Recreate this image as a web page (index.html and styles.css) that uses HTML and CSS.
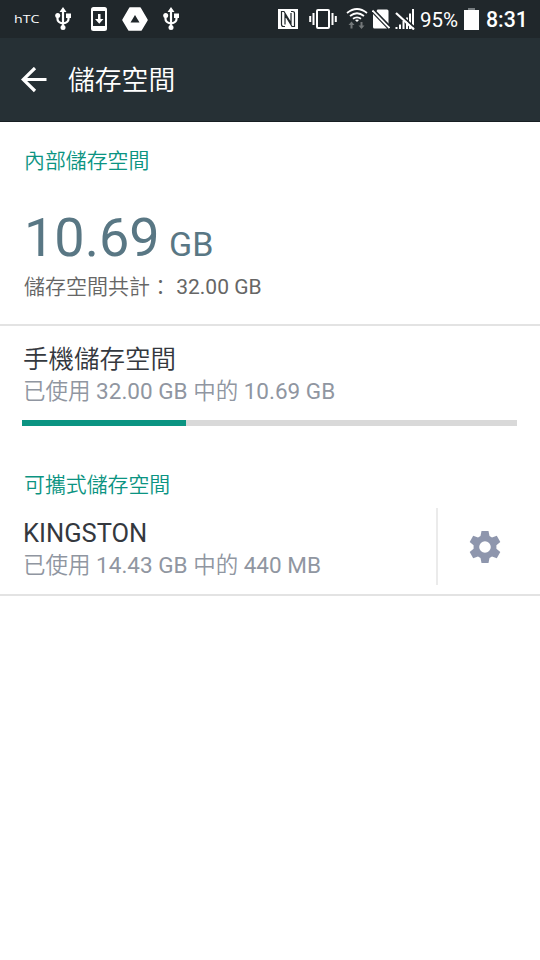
FILE: index.html
```html
<!DOCTYPE html>
<html lang="zh-Hant">
<head>
<meta charset="utf-8">
<title>儲存空間</title>
<link rel="stylesheet" href="styles.css">
</head>
<body>
<header class="top">
  <div class="status">
    <div class="carrier"><span class="carrier-name">hTC</span></div>
    <svg class="usb" width="18" height="24" viewBox="0 0 18 24"><path d="M8 3v17M2.500 8v4q0 3.500 5.500 4.500M13.500 8v4q0 3.500-5.500 4.500" fill="none" stroke="#fff" stroke-width="2.200"/><path d="M8 0l3.500 5h-7zM11 6.500h5v4.500h-5z" fill="#fff"/><circle cx="2.700" cy="8.500" r="2.500" fill="#fff"/><circle cx="8" cy="20.500" r="2.500" fill="#fff"/></svg>
    <svg class="download" width="16" height="24" viewBox="0 0 16 24"><rect width="16" height="24" rx="2.500" fill="#fff"/><path d="M2 4h12v15H2z" fill="#20272b"/><path d="M7 7h2.500v5h3L8.250 16.800 4 12h3z" fill="#fff"/></svg>
    <svg class="drive" width="26" height="24" viewBox="0 0 26 24"><path d="M8 1h10l7 12-6 10H7L1 13z" fill="#fff" stroke="#fff" stroke-width="1.500" stroke-linejoin="round"/><path d="M13 8l4.500 7.500h-9z" fill="#20272b"/></svg>
    <svg class="usb" width="18" height="24" viewBox="0 0 18 24"><path d="M9 3v17M3.500 8v4q0 3.500 5.500 4.500M14.500 8v4q0 3.500-5.500 4.500" fill="none" stroke="#fff" stroke-width="2.200"/><path d="M9 0l3.500 5h-7zM12 6.500h5v4.500h-5z" fill="#fff"/><circle cx="3.700" cy="8.500" r="2.500" fill="#fff"/><circle cx="9" cy="20.500" r="2.500" fill="#fff"/></svg>
    <div class="indicators">
      <svg class="nfc" width="20" height="20" viewBox="0 0 20 20"><path d="M0 0h20v20H0z" fill="#fff"/><path d="M7 17.500H5.500Q3.500 17.500 3.500 15.500V2.500H6L13 14V4M7 15.500V6l7 11.500h2.500V4.500q0-2-2-2H13" fill="none" stroke="#20272b" stroke-width="1.200"/></svg>
      <svg class="vibrate" width="28" height="20" viewBox="0 0 28 20"><rect x="8" y="1" width="12" height="18" rx="1" fill="none" stroke="#fff" stroke-width="2"/><path d="M4.500 4v12M23.500 4v12M1.200 7v6M26.800 7v6" stroke="#fff" stroke-width="2"/></svg>
      <svg class="wifi" width="22" height="22" viewBox="0 0 22 22"><path d="M1 5Q11-3 21 5M4 8Q11 2.500 18 8M7 10.800Q11 7.800 15 10.800" fill="none" stroke="#fff" stroke-width="1.800"/><path d="M9 12q2-1 4 0l-2 2z" fill="#fff"/><path d="M5.500 13.500l3 3.500H6.500v3.500h-2V17h-2zM15.500 21l-3-3.500h2V14h2v3.500h2z" fill="#727779"/></svg>
      <svg class="nosim" width="18" height="20" viewBox="0 0 18 20"><path d="M5.500 .5H15q1.500 0 1.500 1.500v13L4 2.700zM1 5l14 14.500H2.500Q1 19.500 1 18z" fill="#fff"/><path d="M.5 1.500l17 17.500" stroke="#fff" stroke-width="1.800"/><path d="M2 .5L17.500 16.500" stroke="#20272b" stroke-width="1.200"/></svg>
      <svg class="nosignal" width="20" height="21" viewBox="0 0 20 21"><path d="M1.500 18v2M5 15.500V20M8.500 12v8M12 8.500V20M15 4.500V20M18 0v20" stroke="#fff" stroke-width="2"/><path d="M3 3.500L19 18" stroke="#20272b" stroke-width="2"/><path d="M1 4l18 16.500" stroke="#fff" stroke-width="2.200"/></svg>
      <span class="percent">95%</span>
      <svg class="battery" width="15" height="22" viewBox="0 0 15 22"><path d="M4 0h7v2H4z" fill="#777d80"/><path d="M0 2h15v20H0z" fill="#fff"/></svg>
      <span class="clock">8:31</span>
    </div>
  </div>
  <div class="appbar">
    <svg class="back" width="26" height="26" viewBox="0 0 26 26"><path d="M25.500 12.500H2M14 1L2.200 12.500 14 24" fill="none" stroke="#fff" stroke-width="3.200"/></svg>
    <h1 class="title">儲存空間</h1>
  </div>
</header>
<main>
  <section class="summary">
    <h2 class="heading">內部儲存空間</h2>
    <div class="amount">10.69 <span class="unit">GB</span></div>
    <div class="total"><span class="han">儲存空間共計：</span> 32.00 GB</div>
  </section>
  <section class="phone">
    <div class="name"><span class="han">手機儲存空間</span></div>
    <div class="usage"><span class="han">已使用</span> 32.00 GB <span class="han">中的</span> 10.69 GB</div>
    <div class="bar"><div class="fill" style="width:33.1%"></div></div>
  </section>
  <section class="portable">
    <h2 class="heading">可攜式儲存空間</h2>
    <div class="volume">
      <div class="details">
        <div class="name">KINGSTON</div>
        <div class="usage"><span class="han">已使用</span> 14.43 GB <span class="han">中的</span> 440 MB</div>
      </div>
      <div class="settings">
        <svg width="32" height="32" viewBox="0 0 32 32"><path fill-rule="evenodd" fill="#8e96ad" d="M12.500 0h7l1 5 2.500 1.500 4.800-1.800L31.300 11l-3.900 3.200v3.600l3.900 3.200-3.500 6.300-4.800-1.800-2.500 1.500-1 5h-7l-1-5L9 25.500l-4.800 1.800L.7 21l3.900-3.200v-3.600L.7 11l3.500-6.300L9 6.500 11.500 5zM16 10.200a5.800 5.800 0 1 0 0 11.600 5.800 5.800 0 0 0 0-11.600z"/></svg>
      </div>
    </div>
  </section>
</main>
</body>
</html>
```
FILE: styles.css
```css
* { box-sizing: border-box; }
body {
  margin: 0;
  min-height: 960px;
  background: #fff;
  font-family: Roboto, "Noto Sans CJK TC", sans-serif;
}
h1, h2 { margin: 0; }
h1, h2, .han { font-weight: 350; }
svg { display: block; flex: none; }
.top { height: 122px; background: #263035; border-bottom: 1px solid #171e22; color: #fff; }
.status { display: flex; align-items: center; height: 38px; padding: 0 13px 0 14px; background: #20272b; }
.carrier { width: 41px; font: 10.5px/14px "Open Sans", sans-serif; }
.carrier-name { display: inline-block; transform: scaleX(1.35); transform-origin: left; }
.download { margin-left: 18px; }
.drive { margin: 0 14px 0 15px; }
.indicators { display: flex; align-items: center; margin-left: auto; }
.nfc { margin-right: 1px; }
.vibrate { margin-left: 10px; }
.wifi { margin-left: 9px; }
.nosim { margin-left: 4px; }
.nosignal { margin-left: 5px; }
.percent { width: 39px; margin-left: 5px; padding-top: 1px; font-size: 20.5px; white-space: nowrap; }
.battery { margin-left: 5px; }
.clock { width: 41px; margin-left: 7px; padding-top: 1px; font-size: 21.3px; font-weight: 500; }
.appbar { display: flex; align-items: center; height: 83px; padding: 0 21px; gap: 21px; }
.title { padding-top: 2px; font-size: 26.8px; line-height: 40px; }
.summary { height: 204px; padding: 23px 23px 0 24px; border-bottom: 2px solid #e3e3e3; }
.heading { color: #0b9482; font-size: 20.9px; line-height: 32px; }
.amount { margin-top: 29px; color: #597784; font-size: 54px; line-height: 64px; white-space: nowrap; }
.unit { margin-left: -4px; font-size: 34px; }
.total { margin-top: -5px; color: #666; font-size: 21px; line-height: 32px; }
.phone { height: 143px; padding: 16px 23px 0 22px; }
.name { padding-left: 1px; color: #34383e; font-size: 25.5px; line-height: 34px; }
.usage { padding-left: 1px; color: #9096a1; font-size: 22.5px; line-height: 31px; white-space: nowrap; }
.bar { height: 6px; margin-top: 13px; background: #d9d9d9; }
.fill { height: 100%; background: #0b9482; }
.portable { border-bottom: 2px solid #e3e3e3; }
.portable .heading { padding-left: 24px; }
.volume { display: flex; height: 93px; padding: 7px 0 9px; }
.details { flex: 1; padding: 8px 0 0 22px; }
.settings { display: flex; align-items: center; justify-content: center; width: 104px; padding-right: 8px; border-left: 2px solid #ebebeb; }
```
